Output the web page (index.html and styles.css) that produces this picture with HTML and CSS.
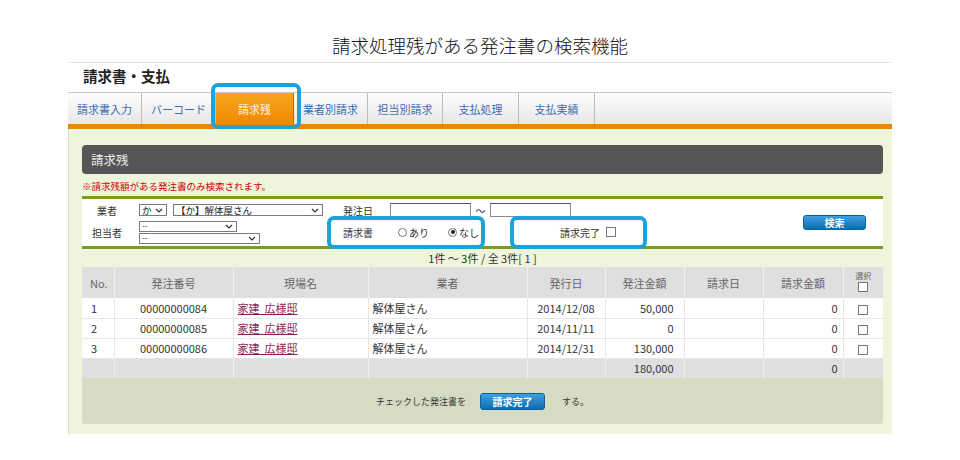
FILE: index.html
```html
<!DOCTYPE html>
<html lang="ja">
<head>
<meta charset="utf-8">
<title>請求残</title>
<link rel="stylesheet" href="styles.css">
</head>
<body>
<h1 class="page-title">請求処理残がある発注書の検索機能</h1>
<div class="app">
  <div class="app-head">請求書・支払</div>
  <nav class="tabs">
    <a class="tab t1">請求書入力</a>
    <a class="tab t2">バーコード</a>
    <a class="tab t3 active">請求残</a>
    <a class="tab t4">業者別請求</a>
    <a class="tab t5">担当別請求</a>
    <a class="tab t6">支払処理</a>
    <a class="tab t7">支払実績</a>
  </nav>
  <main class="content">
    <div class="panel-title">請求残</div>
    <p class="note">※請求残額がある発注書のみ検索されます。</p>
    <form class="search">
      <span class="lbl">業者</span>
      <div class="ctl">
        <span class="sel s-kana">か<svg class="chev" viewBox="0 0 8 5"><path d="M1 1l3 3 3-3" fill="none" stroke="#333" stroke-width="1.2"/></svg></span>
        <span class="sel s-vendor">【か】解体屋さん<svg class="chev" viewBox="0 0 8 5"><path d="M1 1l3 3 3-3" fill="none" stroke="#333" stroke-width="1.2"/></svg></span>
      </div>
      <span class="lbl2">発注日</span>
      <div class="dates">
        <span class="inp"></span><span class="tilde">〜</span><span class="inp"></span>
      </div>
      <div class="btn-cell"><button type="button" class="btn btn-search">検索</button></div>
      <span class="lbl">担当者</span>
      <div class="ctl stack">
        <span class="sel small s-staff1">--<svg class="chev" viewBox="0 0 8 5"><path d="M1 1l3 3 3-3" fill="none" stroke="#333" stroke-width="1.2"/></svg></span>
        <span class="sel small s-staff2">--<svg class="chev" viewBox="0 0 8 5"><path d="M1 1l3 3 3-3" fill="none" stroke="#333" stroke-width="1.2"/></svg></span>
      </div>
      <div class="opts">
        <div class="hl hl-invoice">
          <span class="opt-lbl">請求書</span>
          <span class="radio-item"><span class="radio"></span>あり</span>
          <span class="radio-item"><span class="radio on"></span>なし</span>
        </div>
        <div class="hl hl-done">請求完了<span class="chk"></span></div>
      </div>
    </form>
    <div class="pager">1件 〜 3件 / 全 3件[ 1 ]</div>
    <table class="list">
      <colgroup>
        <col class="c-no"><col class="c-num"><col class="c-site"><col class="c-vendor"><col class="c-date"><col class="c-amt"><col class="c-idate"><col class="c-iamt"><col class="c-sel">
      </colgroup>
      <thead>
        <tr>
          <th class="left">No.</th><th>発注番号</th><th>現場名</th><th>業者</th><th>発行日</th><th>発注金額</th><th>請求日</th><th>請求金額</th>
          <th class="selh"><span class="selh-t">選択</span><span class="chk"></span></th>
        </tr>
      </thead>
      <tbody>
        <tr><td class="no">1</td><td class="center">00000000084</td><td><a class="link">家建&nbsp;&nbsp;広様邸</a></td><td>解体屋さん</td><td class="center">2014/12/08</td><td class="num">50,000</td><td></td><td class="num2">0</td><td class="center"><span class="chk"></span></td></tr>
        <tr><td class="no">2</td><td class="center">00000000085</td><td><a class="link">家建&nbsp;&nbsp;広様邸</a></td><td>解体屋さん</td><td class="center">2014/11/11</td><td class="num">0</td><td></td><td class="num2">0</td><td class="center"><span class="chk"></span></td></tr>
        <tr><td class="no">3</td><td class="center">00000000086</td><td><a class="link">家建&nbsp;&nbsp;広様邸</a></td><td>解体屋さん</td><td class="center">2014/12/31</td><td class="num">130,000</td><td></td><td class="num2">0</td><td class="center"><span class="chk"></span></td></tr>
        <tr class="total"><td></td><td></td><td></td><td></td><td></td><td class="num">180,000</td><td></td><td class="num2">0</td><td></td></tr>
      </tbody>
    </table>
    <div class="actions">
      <span class="act-text">チェックした発注書を</span>
      <button type="button" class="btn btn-done">請求完了</button>
      <span class="act-text">する。</span>
    </div>
  </main>
</div>
</body>
</html>
```
FILE: styles.css
```css
* { box-sizing: border-box; }
html, body { margin: 0; padding: 0; background: #fff; }
body {
  width: 960px;
  height: 460px;
  overflow: hidden;
  font-family: "Noto Sans CJK JP", "Noto Sans", sans-serif;
  color: #333;
}
.page-title {
  margin: 0;
  padding: 35px 0 7px;
  font-size: 18.5px;
  line-height: 20px;
  font-weight: 300;
  text-align: center;
  color: #111;
}
.app {
  margin-left: 68px;
  width: 824px;
  border-top: 1px solid #e3e3e3;
}
.app-head {
  height: 29px;
  padding: 3px 0 0 15px;
  font-size: 14.5px;
  line-height: 20px;
  font-weight: 700;
  color: #222;
}
.tabs {
  display: flex;
  height: 37px;
  border-top: 1px solid #c8c8c8;
  border-bottom: 5px solid #e8870f;
  background: linear-gradient(#fdfdfd, #e7e7e7);
}
.tab {
  display: flex;
  align-items: center;
  justify-content: center;
  height: 31px;
  font-size: 11px;
  color: #3a6db5;
  border-right: 1px solid #bcbcbc;
}
.t1 { width: 74px; }
.t2 { width: 74px; }
.t3 { width: 78px; }
.t4 { width: 74px; }
.t5 { width: 75px; }
.t6 { width: 76px; }
.t7 { width: 76px; }
.tab.active {
  position: relative;
  background: linear-gradient(#f8a51f, #ee8a00);
  color: #fff4e4;
  border-right-color: #b06a10;
}
.tab.active::after {
  content: "";
  position: absolute;
  left: -5px;
  right: -8px;
  top: -10px;
  bottom: -5px;
  border: 4px solid #1ba4da;
  border-radius: 7px;
}
.content {
  background: #eef5dc;
  border-left: 1px solid #d9ddc9;
  padding: 16px 9px 10px 13px;
}
.panel-title {
  height: 29px;
  padding-left: 9px;
  background: #565656;
  border-radius: 4px;
  color: #eaeaea;
  font-size: 12.5px;
  line-height: 29px;
}
.note {
  margin: 0;
  height: 22px;
  padding-top: 4px;
  font-size: 9.5px;
  line-height: 16px;
  color: #d40000;
}
.search {
  display: grid;
  grid-template-columns: 57px 204px 47px 1fr auto;
  grid-template-rows: 20px 24px;
  align-items: center;
  height: 53px;
  padding: 1px 17px 2px 0;
  background: #fff;
  border-top: 3px solid #7d9c1d;
  border-bottom: 3px solid #7d9c1d;
  font-size: 10px;
  color: #333;
}
.lbl {
  text-align: center;
  padding-right: 7px;
}
.ctl {
  display: flex;
  align-items: center;
  gap: 6px;
}
.ctl.stack {
  flex-direction: column;
  align-items: flex-start;
  gap: 1px;
}
.sel {
  display: flex;
  align-items: center;
  justify-content: space-between;
  height: 12px;
  padding: 0 3px 0 2px;
  border: 1px solid #7a7a7a;
  background: #fff;
  font-size: 9.5px;
  line-height: 10px;
  color: #222;
}
.sel.small {
  height: 11px;
  font-size: 8px;
  line-height: 8px;
  overflow: hidden;
}
.chev { width: 8px; height: 5px; }
.s-kana { width: 28px; }
.s-vendor { width: 150px; }
.s-staff1 { width: 98px; }
.s-staff2 { width: 121px; }
.dates {
  display: flex;
  align-items: center;
}
.inp {
  width: 81px;
  height: 14px;
  border: 1px solid #8a8a8a;
  border-top-color: #555;
  background: #fff;
}
.tilde {
  width: 19px;
  text-align: center;
  font-size: 10px;
}
.btn-cell {
  grid-row: 1 / 3;
  grid-column: 5;
  align-self: center;
}
.btn {
  display: inline-flex;
  align-items: center;
  justify-content: center;
  padding: 0;
  border: 1px solid #0a5f9c;
  border-radius: 3px;
  background: linear-gradient(#3fa0dd, #0b6db1);
  color: #fff;
  font-family: inherit;
  font-weight: 700;
  font-size: 10px;
}
.btn-search {
  width: 63px;
  height: 15px;
  margin-top: 1px;
}
.opts {
  grid-column: 3 / 5;
  display: flex;
  align-items: center;
  height: 24px;
}
.hl {
  position: relative;
  display: flex;
  align-items: center;
  height: 24px;
}
.hl::after {
  content: "";
  position: absolute;
  top: -4px;
  bottom: -5px;
  border: 4px solid #1ba4da;
  border-radius: 7px;
}
.hl-invoice { width: 136px; }
.hl-invoice::after { left: -16px; right: -6px; }
.opt-lbl { width: 55px; }
.radio-item {
  display: inline-flex;
  align-items: center;
  gap: 2px;
  margin-right: 19px;
}
.radio-item:last-child { margin-right: 0; }
.radio {
  display: inline-flex;
  align-items: center;
  justify-content: center;
  width: 9px;
  height: 9px;
  border: 1px solid #777;
  border-radius: 50%;
  background: #fff;
}
.radio.on::before {
  content: "";
  width: 4px;
  height: 4px;
  border-radius: 50%;
  background: #222;
}
.hl-done {
  margin-left: 31px;
  width: 137px;
  padding-left: 50px;
  gap: 6px;
}
.hl-done::after { left: 0; right: 0; }
.chk {
  display: inline-block;
  width: 10px;
  height: 10px;
  border: 1px solid #777;
  background: #fff;
}
.pager {
  height: 18px;
  line-height: 18px;
  font-size: 11px;
  text-align: center;
  color: #333;
}
.list {
  width: 801px;
  border-collapse: collapse;
  table-layout: fixed;
  font-size: 11px;
  color: #333;
}
.c-no { width: 32px; }
.c-num { width: 119px; }
.c-site { width: 135px; }
.c-vendor { width: 159px; }
.c-date { width: 78px; }
.c-amt { width: 79px; }
.c-idate { width: 79px; }
.c-iamt { width: 80px; }
.c-sel { width: 40px; }
.list th {
  height: 31px;
  padding: 0;
  background: #dfdfdf;
  border-left: 1px solid #f2f2f2;
  font-weight: 400;
  color: #666;
  text-align: center;
}
.list th:first-child { border-left: none; }
.list th.left { text-align: left; padding-left: 8px; }
.selh { line-height: 1; }
.selh-t { display: block; font-size: 8px; margin-bottom: 2px; }
.list td {
  height: 20px;
  padding: 0 4px;
  background: #fff;
  border-left: 1px solid #e6e6e6;
  border-bottom: 1px solid #e6e6e6;
  white-space: nowrap;
}
.list td:first-child { border-left: none; }
.list td.no { padding-left: 9px; }
.list td.center { text-align: center; }
.list td.num { text-align: right; padding-right: 10px; }
.list td.num2 { text-align: right; padding-right: 5px; }
.list td .chk { vertical-align: middle; }
.list tr.total td {
  background: #dfdfdf;
  border-left-color: #f0f0f0;
  border-bottom: none;
}
.link {
  color: #8a1f52;
  text-decoration: underline;
}
.actions {
  display: flex;
  align-items: center;
  justify-content: center;
  width: 801px;
  height: 46px;
  background: #d6dbc3;
  border-radius: 0 0 3px 3px;
  font-size: 9px;
  color: #333;
}
.btn-done {
  width: 65px;
  height: 17px;
  margin: 0 17px 0 14px;
}
```
